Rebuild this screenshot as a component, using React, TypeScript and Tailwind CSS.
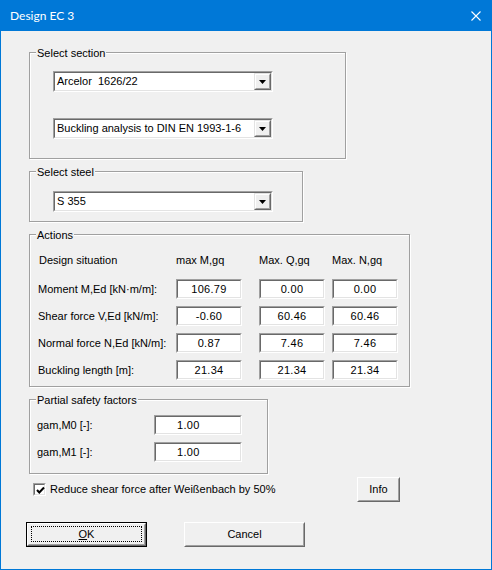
import React from "react";

const font = "font-['Liberation_Sans',Arial,sans-serif]";

function Sunken({ className, children }: { className?: string; children?: React.ReactNode }) {
  return (
    <div className={`border border-t-[#a0a0a0] border-l-[#a0a0a0] border-b-white border-r-white ${className ?? ""}`}>
      <div className="h-full w-full border border-t-[#696969] border-l-[#696969] border-b-[#e3e3e3] border-r-[#e3e3e3] bg-white">
        {children}
      </div>
    </div>
  );
}

function Combo({ value, width }: { value: string; width: string }) {
  return (
    <Sunken className={`${width} h-[21px]`}>
      <div className="flex h-full items-center">
        <span className="flex-1 truncate whitespace-pre pl-[2px] leading-[13px]">{value}</span>
        <div className="flex h-[17px] w-[17px] items-center justify-center border border-t-[#e3e3e3] border-l-[#e3e3e3] border-b-[#696969] border-r-[#696969] bg-[#f0f0f0]">
          <div className="flex h-full w-full items-center justify-center border border-t-white border-l-white border-b-[#a0a0a0] border-r-[#a0a0a0]">
            <svg width="7" height="4" viewBox="0 0 7 4">
              <polygon points="0,0 7,0 3.5,4" fill="#000" />
            </svg>
          </div>
        </div>
      </div>
    </Sunken>
  );
}

function Field({ value, className, align = "center" }: { value: string; className?: string; align?: "center" | "left" }) {
  return (
    <Sunken className={`h-[20px] ${className ?? "w-[66px]"}`}>
      <div className={`flex h-full items-center leading-[13px] tracking-[0.3px] ${align === "center" ? "justify-center" : "pl-[21px]"}`}>
        {value}
      </div>
    </Sunken>
  );
}

function Group({ label, className, children }: { label: string; className: string; children?: React.ReactNode }) {
  return (
    <div className={`relative border border-[#a0a0a0] shadow-[1px_1px_0_#fff,inset_1px_1px_0_#fff] ${className}`}>
      <span className="absolute left-[6px] top-[-6px] bg-[#f0f0f0] px-[1px] leading-[13px]">{label}</span>
      {children}
    </div>
  );
}

function Button({ children, className, isDefault }: { children: React.ReactNode; className: string; isDefault?: boolean }) {
  return (
    <div className={`h-[25px] bg-[#f0f0f0] ${isDefault ? "border border-black" : ""} ${className}`}>
      <div className="h-full w-full border border-t-white border-l-white border-b-[#696969] border-r-[#696969]">
        <div className="relative flex h-full w-full items-center justify-center border border-t-[#f0f0f0] border-l-[#f0f0f0] border-b-[#a0a0a0] border-r-[#a0a0a0] leading-[13px]">
          {isDefault && <div className="absolute left-[2px] right-[2px] top-[1px] bottom-[2px] border border-dotted border-black" />}
          {children}
        </div>
      </div>
    </div>
  );
}

const rows = [
  { label: "Moment M,Ed [kN·m/m]:", v: ["106.79", "0.00", "0.00"] },
  { label: "Shear force V,Ed [kN/m]:", v: ["-0.60", "60.46", "60.46"] },
  { label: "Normal force N,Ed [kN/m]:", v: ["0.87", "7.46", "7.46"] },
  { label: "Buckling length [m]:", v: ["21.34", "21.34", "21.34"] },
];

export default function App() {
  return (
    <div className={`flex h-[570px] w-[492px] flex-col border border-[#0078d7] bg-[#f0f0f0] text-[11px] text-black ${font}`}>
      {/* title bar */}
      <div className="flex h-[30px] shrink-0 items-center justify-between bg-[#0078d7] pl-[9px] pr-[10px] text-white">
        <span className="font-['Lato','Noto_Sans',sans-serif] text-[12px] leading-[16px]">Design EC 3</span>
        <svg width="10" height="10" viewBox="0 0 10 10" className="mt-[-1px]">
          <path d="M0.5 0.5 L9.5 9.5 M9.5 0.5 L0.5 9.5" stroke="#fff" strokeWidth="1.1" />
        </svg>
      </div>

      <div className="flex flex-col pl-[25px]">
        <div className="flex flex-col pl-[3px]">
          <Group label="Select section" className="mt-[21px] h-[107px] w-[317px] pl-[23px] pt-[18px]">
            <Combo value="Arcelor  1626/22" width="w-[220px]" />
            <div className="mt-[26px]">
              <Combo value="Buckling analysis to DIN EN 1993-1-6" width="w-[220px]" />
            </div>
          </Group>

          <Group label="Select steel" className="mt-[12px] h-[51px] w-[274px] pl-[23px] pt-[19px]">
            <Combo value="S 355" width="w-[220px]" />
          </Group>

          <Group label="Actions" className="mt-[12px] h-[153px] w-[381px] pl-[8px] pt-[19px]">
            <div className="flex leading-[13px]">
              <span className="w-[138px] pl-[1px]">Design situation</span>
              <span className="w-[66px]">max M,gq</span>
              <span className="ml-[17px] w-[66px]">Max. Q,gq</span>
              <span className="ml-[7px] w-[66px]">Max. N,gq</span>
            </div>
            <div className="mt-[12px] flex flex-col gap-[7px]">
              {rows.map((r) => (
                <div key={r.label} className="flex items-center">
                  <span className="w-[138px] leading-[13px]">{r.label}</span>
                  <Field value={r.v[0]} />
                  <Field value={r.v[1]} className="ml-[17px] w-[66px]" />
                  <Field value={r.v[2]} className="ml-[7px] w-[66px]" />
                </div>
              ))}
            </div>
          </Group>

          <Group label="Partial safety factors" className="mt-[12px] h-[75px] w-[239px] pl-[7px] pt-[15px]">
            <div className="flex flex-col gap-[7px]">
              <div className="flex items-center">
                <span className="w-[117px] leading-[13px]">gam,M0 [-]:</span>
                <Field value="1.00" className="w-[88px]" align="left" />
              </div>
              <div className="flex items-center">
                <span className="w-[117px] leading-[13px]">gam,M1 [-]:</span>
                <Field value="1.00" className="w-[88px]" align="left" />
              </div>
            </div>
          </Group>

          <div className="mt-[3px] flex h-[25px] w-[371px] items-center">
            <Sunken className="ml-[4px] h-[13px] w-[13px]">
              <svg width="11" height="11" viewBox="0 0 11 11" className="block">
                <path d="M2 5 L4.3 7.5 L9 2.5" stroke="#000" strokeWidth="2" fill="none" />
              </svg>
            </Sunken>
            <span className="ml-[4px] leading-[13px]">Reduce shear force after Weißenbach by 50%</span>
            <Button className="ml-auto w-[43px]">Info</Button>
          </div>
        </div>

        <div className="mt-[20px] flex">
          <Button className="w-[121px]" isDefault>
            <span className="relative">
              <u>O</u>K
            </span>
          </Button>
          <Button className="ml-[37px] w-[121px]">Cancel</Button>
        </div>
      </div>
    </div>
  );
}
